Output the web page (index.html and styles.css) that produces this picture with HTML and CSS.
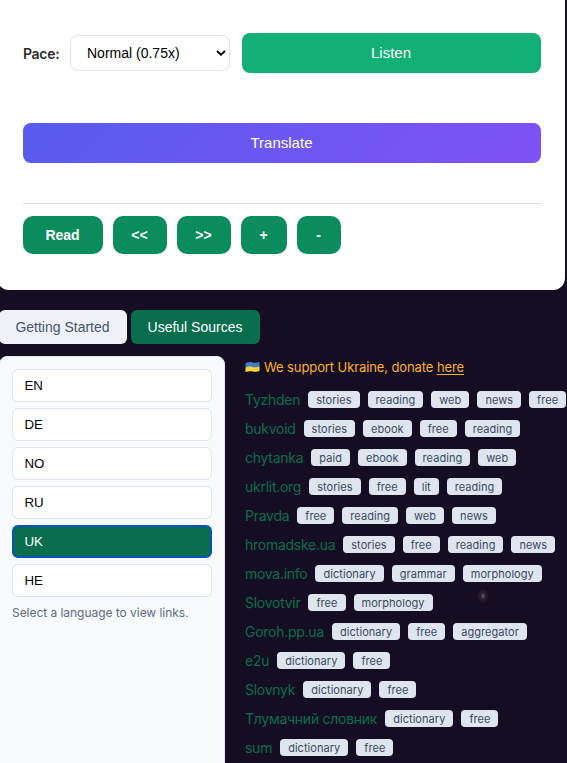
FILE: index.html
```
<!DOCTYPE html>
<html lang="en">
<head>
    <meta charset="UTF-8"/>
    <title>Reader</title>
    <link rel="stylesheet" href="styles.css">
</head>
<body>
<div class="card">
    <div class="pace-row">
        <label for="pace">Pace:</label>
        <div class="select-wrap">
            <select id="pace">
                <option>Slow (0.5x)</option>
                <option selected>Normal (0.75x)</option>
                <option>Fast (1x)</option>
            </select>
            <svg class="chevron" viewBox="0 0 10 6"><path d="M1 1l4 3.7L9 1"/></svg>
        </div>
        <button class="btn-listen">Listen</button>
    </div>
    <button class="btn-translate">Translate</button>
    <div class="controls">
        <button class="btn-read">Read</button>
        <button class="btn-step">&lt;&lt;</button>
        <button class="btn-step">&gt;&gt;</button>
        <button class="btn-plus">+</button>
        <button class="btn-minus">-</button>
    </div>
</div>

<div class="tabs">
    <button class="tab tab-start">Getting Started</button>
    <button class="tab tab-sources active">Useful Sources</button>
</div>

<div class="sources">
    <div class="languages">
        <button class="lang">EN</button>
        <button class="lang">DE</button>
        <button class="lang">NO</button>
        <button class="lang">RU</button>
        <button class="lang selected">UK</button>
        <button class="lang">HE</button>
        <p class="hint">Select a language to view links.</p>
    </div>
    <div class="links">
        <p class="support">
            <svg class="flag" viewBox="0 0 15 12">
                <path fill="#3f7bc4" d="M.5 2.2C3 .8 5 .8 7.500 1.500S12 1.800 14.500 .8V6C12 7 10 6.800 7.500 6.300S3 5.800 .5 7z"/>
                <path fill="#f5d33b" d="M.5 6.500C3 5.300 5 5.500 7.500 6S12 6.300 14.500 5.500V10C12 11 10 10.900 7.500 10.400S3 10.200 .5 11.200z"/>
            </svg>
            <span>We support Ukraine, donate <a href="#">here</a></span>
        </p>
        <div class="source"><a href="#">Tyzhden</a><span class="tag">stories</span><span class="tag">reading</span><span class="tag">web</span><span class="tag">news</span><span class="tag">free</span></div>
        <div class="source"><a href="#">bukvoid</a><span class="tag">stories</span><span class="tag">ebook</span><span class="tag">free</span><span class="tag">reading</span></div>
        <div class="source"><a href="#">chytanka</a><span class="tag">paid</span><span class="tag">ebook</span><span class="tag">reading</span><span class="tag">web</span></div>
        <div class="source"><a href="#">ukrlit.org</a><span class="tag">stories</span><span class="tag">free</span><span class="tag">lit</span><span class="tag">reading</span></div>
        <div class="source"><a href="#">Pravda</a><span class="tag">free</span><span class="tag">reading</span><span class="tag">web</span><span class="tag">news</span></div>
        <div class="source"><a href="#">hromadske.ua</a><span class="tag">stories</span><span class="tag">free</span><span class="tag">reading</span><span class="tag">news</span></div>
        <div class="source"><a href="#">mova.info</a><span class="tag">dictionary</span><span class="tag">grammar</span><span class="tag">morphology</span></div>
        <div class="source"><a href="#">Slovotvir</a><span class="tag">free</span><span class="tag">morphology</span></div>
        <div class="source"><a href="#">Goroh.pp.ua</a><span class="tag">dictionary</span><span class="tag">free</span><span class="tag">aggregator</span></div>
        <div class="source"><a href="#">e2u</a><span class="tag">dictionary</span><span class="tag">free</span></div>
        <div class="source"><a href="#">Slovnyk</a><span class="tag">dictionary</span><span class="tag">free</span></div>
        <div class="source"><a href="#">Тлумачний словник</a><span class="tag">dictionary</span><span class="tag">free</span></div>
        <div class="source"><a href="#">sum</a><span class="tag">dictionary</span><span class="tag">free</span></div>
    </div>
</div>
</body>
</html>
```

FILE: styles.css
```
* {
    margin: 0;
    padding: 0;
    box-sizing: border-box;
}

body {
    height: 763px;
    overflow: hidden;
    font-family: Inter, sans-serif;
    background: radial-gradient(ellipse 6px 8px at 483px 596px, #6b5860 0%, rgba(60, 40, 55, .6) 45%, transparent 100%), #150e22;
}

button,
select {
    font-family: "Liberation Sans", Arial, sans-serif;
    border: none;
    cursor: pointer;
}

.card {
    width: 568px;
    height: 290px;
    margin-left: -3px;
    padding: 33px 24px 0 26px;
    background-color: #fff;
    border-radius: 0 0 12px 12px;
}

.pace-row {
    display: flex;
    align-items: center;
    height: 40px;
}

.pace-row label {
    width: 47px;
    font-size: 14px;
    font-weight: 600;
    letter-spacing: -.3px;
    color: #2b2b2b;
    white-space: nowrap;
}

.select-wrap {
    position: relative;
    width: 160px;
    height: 36px;
    margin-right: 12px;
}

.select-wrap select {
    width: 100%;
    height: 100%;
    padding: 0 16px;
    font-size: 14px;
    color: #000;
    background-color: #fff;
    border: 1px solid #e1e1e8;
    border-radius: 8px;
    -webkit-appearance: none;
    appearance: none;
}

.chevron {
    position: absolute;
    right: 4px;
    top: 15px;
    width: 10px;
    height: 6px;
    fill: none;
    stroke: #000;
    stroke-width: 1.8;
    pointer-events: none;
}

.btn-listen,
.btn-translate {
    height: 40px;
    padding: 0 1px 2px 0;
    font-size: 15px;
    color: #fff;
    border-radius: 8px;
}

.btn-listen {
    flex: 1;
    background-color: #12b077;
}

.btn-translate {
    display: block;
    width: 100%;
    margin-top: 50px;
    background: linear-gradient(135deg, #585bee, #8052f5);
}

.controls {
    display: flex;
    gap: 10px;
    margin-top: 40px;
    padding-top: 12px;
    border-top: 1px solid #dedede;
}

.controls button {
    height: 38px;
    padding-right: 1px;
    font-size: 14px;
    font-weight: bold;
    color: #fff;
    background-color: #0b8c5d;
    border-radius: 10px;
}

.controls .btn-read {
    width: 80px;
}

.controls .btn-step {
    width: 54px;
}

.controls .btn-plus {
    width: 46px;
}

.controls .btn-minus {
    width: 44px;
}

.tabs {
    display: flex;
    gap: 4px;
    margin: 20px 0 12px -1px;
}

.tab {
    height: 34px;
    padding-right: 1px;
    font-size: 14px;
    color: #475569;
    background-color: #eef2f8;
    border-radius: 6px;
}

.tab-start {
    width: 128px;
}

.tab-sources {
    width: 129px;
}

.tab.active {
    color: #fff;
    background-color: #096e4d;
}

.sources {
    display: flex;
    gap: 20px;
    margin-left: -1px;
}

.languages {
    display: flex;
    flex-direction: column;
    flex: none;
    gap: 6px;
    width: 226px;
    height: 420px;
    padding: 12px;
    background-color: #f8fafd;
    border: 1px solid #e2e8f0;
    border-radius: 8px;
}

.lang {
    width: 200px;
    height: 33px;
    padding-left: 11.5px;
    font-size: 13.3px;
    text-align: left;
    color: #000;
    background-color: #fff;
    border: 1px solid #dfe5ee;
    border-radius: 6px;
}

.lang.selected {
    padding-left: 10.5px;
    color: #fff;
    background-color: #096e4d;
    border: 2px solid #0453c0;
}

.hint {
    margin-top: 1px;
    font-size: 12px;
    line-height: 18px;
    letter-spacing: -.04px;
    color: #5c6b83;
    white-space: nowrap;
}

.links {
    flex: 1;
    white-space: nowrap;
}

.support {
    display: flex;
    align-items: center;
    gap: 4px;
    height: 22px;
    margin-bottom: 7px;
    font-size: 13px;
    letter-spacing: -.1px;
    color: #fbb224;
}

.support a {
    color: inherit;
    text-underline-offset: 2px;
}

.flag {
    width: 15px;
    height: 12px;
}

.source {
    display: flex;
    align-items: center;
    gap: 8px;
    height: 29px;
}

.source a {
    font-size: 14px;
    letter-spacing: -.27px;
    color: #096e4d;
    text-decoration: none;
}

.tag {
    height: 17px;
    padding: 0 8px;
    font-size: 11px;
    line-height: 18px;
    letter-spacing: .05px;
    color: #3b4a60;
    background-color: #dfe5ef;
    border-radius: 4px;
}
```
